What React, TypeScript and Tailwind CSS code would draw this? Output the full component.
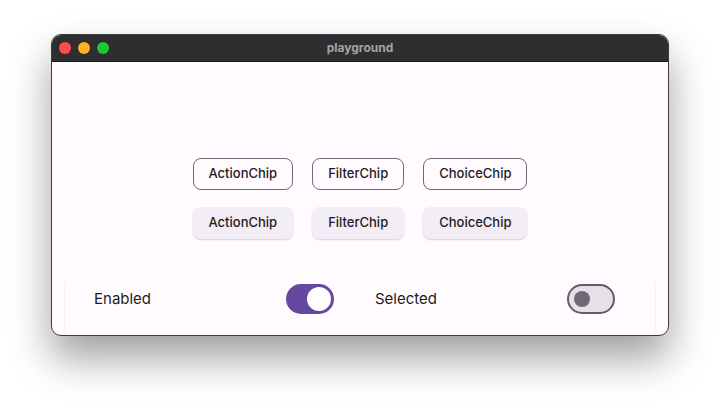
import React from "react";

function Chip({ label, outlined }: { label: string; outlined: boolean }) {
  return (
    <div
      className={
        outlined
          ? "h-[32px] px-[15px] flex items-center rounded-[8px] border border-[#6f6b74] text-[13px] font-medium text-[#1d1b20]"
          : "h-[32px] px-[16px] flex items-center rounded-[8px] bg-[#f3edf6] shadow-[0_1px_2px_rgba(0,0,0,0.18)] text-[13px] font-medium text-[#1d1b20]"
      }
    >
      {label}
    </div>
  );
}

export default function App() {
  return (
    <div className="w-[720px] h-[404px] bg-white relative" style={{ fontFamily: "Inter, 'Noto Sans', sans-serif" }}>
      <div className="absolute left-[51px] top-[34px] w-[618px] h-[302px] rounded-[10px] border border-[#3b3b3d] overflow-hidden shadow-[0_22px_40px_rgba(0,0,0,0.38)] flex flex-col bg-[#fffbfe]">
        <div className="h-[27px] bg-[#2e2e30] border-b border-[#1b1b1b] flex items-center relative shrink-0">
          <div className="flex items-center gap-[7px] pl-[7px]">
            <div className="w-[12px] h-[12px] rounded-full bg-[#fe4c4e]" />
            <div className="w-[12px] h-[12px] rounded-full bg-[#fdb126]" />
            <div className="w-[12px] h-[12px] rounded-full bg-[#1ec633]" />
          </div>
          <div className="absolute inset-0 flex items-center justify-center text-[12px] font-bold text-[#a3a3a3]">
            playground
          </div>
        </div>
        <div className="flex-1 flex flex-col">
          <div className="flex justify-center gap-[19px] mt-[96px]">
            <Chip label="ActionChip" outlined />
            <Chip label="FilterChip" outlined />
            <Chip label="ChoiceChip" outlined />
          </div>
          <div className="flex justify-center gap-[19px] mt-[17px]">
            <Chip label="ActionChip" outlined={false} />
            <Chip label="FilterChip" outlined={false} />
            <Chip label="ChoiceChip" outlined={false} />
          </div>
          <div className="mt-[43px] mx-[12px] flex-1 border-x border-[#f6f2f6] flex items-start pt-[2px] pl-[29px] gap-[41px]">
            <div className="w-[240px] flex items-center justify-between">
              <span className="text-[15px] text-[#1d1b20]">Enabled</span>
              <div className="w-[48px] h-[30px] rounded-full bg-[#65489f] flex items-center justify-end pr-[3px]">
                <div className="w-[24px] h-[24px] rounded-full bg-white" />
              </div>
            </div>
            <div className="w-[240px] flex items-center justify-between">
              <span className="text-[15px] text-[#1d1b20]">Selected</span>
              <div className="w-[48px] h-[30px] rounded-full bg-[#e6e0e9] border-2 border-[#615d67] flex items-center pl-[5px]">
                <div className="w-[16px] h-[16px] rounded-full bg-[#6f6876]" />
              </div>
            </div>
          </div>
        </div>
      </div>
    </div>
  );
}
